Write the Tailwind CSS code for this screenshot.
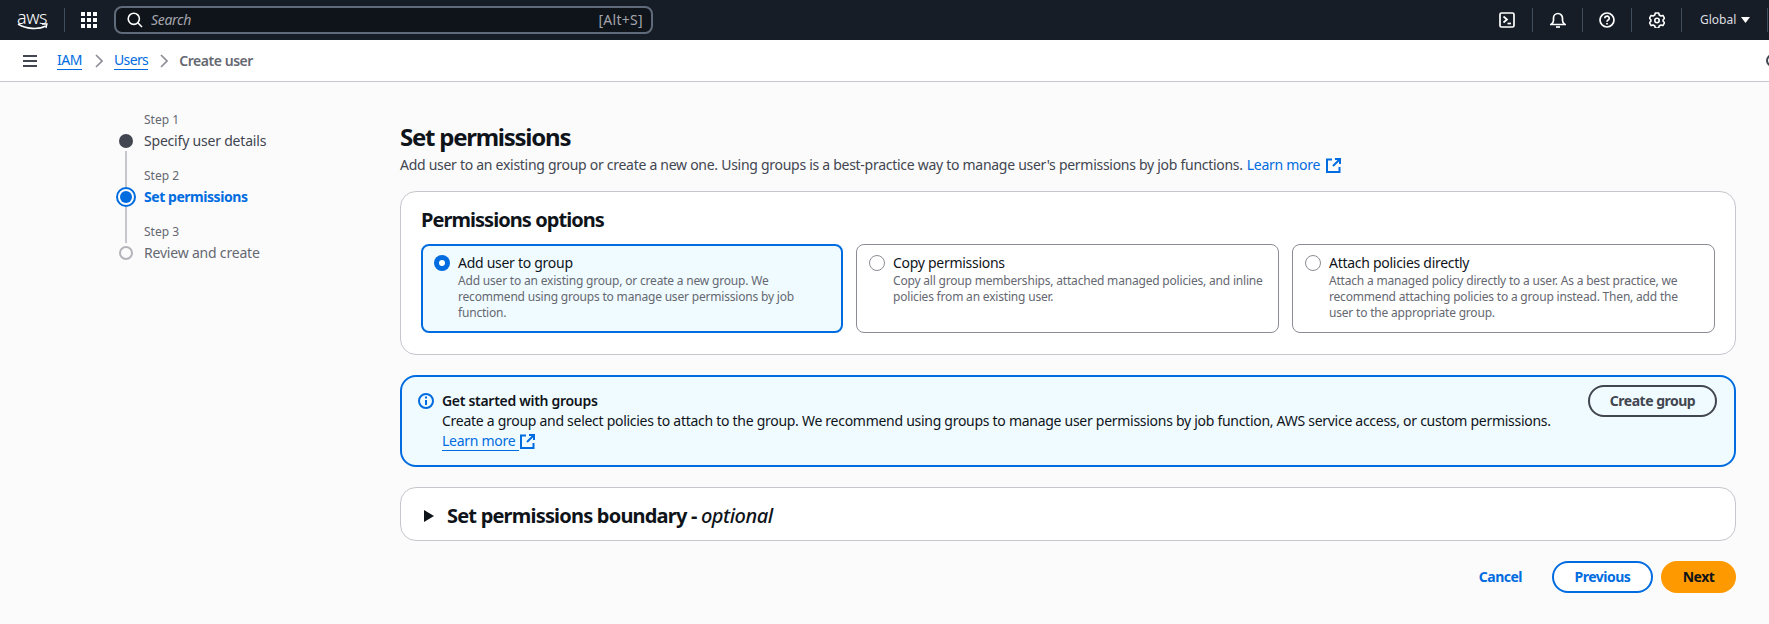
<!DOCTYPE html>
<html>
<head>
<meta charset="utf-8">
<script src="https://cdn.jsdelivr.net/npm/@tailwindcss/browser@4"></script>
</head>
<body class="m-0 h-[624px] w-[1769px] overflow-hidden bg-[#fbfbfc] font-['Noto_Sans',sans-serif] text-sm tracking-[-0.28px] text-[#0f141a]">
<header class="flex h-10 items-center bg-[#161d26] text-white tracking-normal">
  <div class="ml-4 flex w-8 flex-col items-center">
    <span class="text-[18px] leading-[14px] font-light tracking-[-0.5px]">aws</span>
    <svg class="-mt-px" width="31" height="8" viewBox="0 0 31 8" fill="none"><path d="M1 1c8 5 20 6 28 2" stroke="#fff" stroke-width="1.6"/><path d="M25 1l5 0-1 4" stroke="#fff" stroke-width="1.3"/></svg>
  </div>
  <div class="ml-[16px] h-6 w-px bg-[#414d5c]"></div>
  <svg class="ml-4" width="16" height="16" viewBox="0 0 16 16" fill="#fff"><rect x="0" y="0" width="4" height="4"/><rect x="6" y="0" width="4" height="4"/><rect x="12" y="0" width="4" height="4"/><rect x="0" y="6" width="4" height="4"/><rect x="6" y="6" width="4" height="4"/><rect x="12" y="6" width="4" height="4"/><rect x="0" y="12" width="4" height="4"/><rect x="6" y="12" width="4" height="4"/><rect x="12" y="12" width="4" height="4"/></svg>
  <div class="ml-[17px] flex h-[28px] w-[539px] items-center rounded-lg border-2 border-[#5f6b7a] bg-[#0f141a] pl-[11px] pr-[8px]">
    <svg width="16" height="16" viewBox="0 0 16 16" fill="none" stroke="#fff" stroke-width="1.6"><circle cx="6.8" cy="6.8" r="5.6"/><path d="M10.8 10.8L15 15"/></svg>
    <span class="ml-2 text-sm tracking-[-0.3px] italic text-[#a4a4ad]">Search</span>
    <span class="ml-auto text-sm tracking-[0.3px] text-[#a4a4ad]">[Alt+S]</span>
  </div>
  <div class="ml-auto flex items-center">
    <div class="flex w-[50px] justify-center">
      <svg width="16" height="16" viewBox="0 0 16 16" fill="none" stroke="#fff" stroke-width="1.7"><rect x="1" y="1" width="14" height="14" rx="1.5"/><path d="M4.5 4.5L8 7.5 4.5 10.5"/><path d="M8.5 11.5H12"/></svg>
    </div>
    <div class="h-6 w-px bg-[#414d5c]"></div>
    <div class="flex w-[49px] justify-center">
      <svg width="16" height="16" viewBox="0 0 16 16" fill="none" stroke="#fff" stroke-width="1.7"><path d="M1 12.500c1.800-1 2.500-2 2.500-4V6a4.500 4.500 0 019 0v2.500c0 2 .7 3 2.500 4z"/><path d="M6 15h4"/></svg>
    </div>
    <div class="h-6 w-px bg-[#414d5c]"></div>
    <div class="flex w-[48px] justify-center">
      <svg width="16" height="16" viewBox="0 0 16 16" fill="none" stroke="#fff" stroke-width="1.7"><circle cx="8" cy="8" r="7"/><path d="M5.800 6.300a2.200 2.200 0 114 1.200c-.7.7-1.800 1-1.800 2.300"/><path d="M8 11v1.500"/></svg>
    </div>
    <div class="h-6 w-px bg-[#414d5c]"></div>
    <div class="flex w-[49px] justify-center">
      <svg width="16" height="16" viewBox="0 0 16 16" fill="none" stroke="#fff" stroke-width="1.600"><path d="M6.300 1h3.400l.5 2 1.700 1 2-.6 1.700 2.900-1.500 1.500v1.400l1.500 1.500-1.700 2.900-2-.6-1.700 1-.5 2H6.300l-.5-2-1.700-1-2 .6L.4 10.700l1.500-1.500V7.800L.4 6.300l1.700-2.900 2 .6 1.700-1z" stroke-linejoin="round"/><circle cx="8" cy="8.500" r="2.200"/></svg>
    </div>
    <div class="h-6 w-px bg-[#414d5c]"></div>
    <div class="flex w-[85px] items-center pl-[18px] text-xs text-[#dedee3]">
      <span>Global</span>
      <svg class="ml-[5px]" width="9" height="6" viewBox="0 0 9 6" fill="#fff"><path d="M0 0h9L4.500 6z"/></svg>
    </div>
    <div class="h-6 w-px bg-[#414d5c]"></div>
    <div class="w-px"></div>
  </div>
</header>
<nav class="relative flex h-[42px] items-center overflow-hidden border-b border-[#c6c6cd] bg-white">
  <svg class="ml-[23px]" width="14" height="12" viewBox="0 0 14 12" fill="none" stroke="#424650" stroke-width="2"><path d="M0 1h14M0 6h14M0 11h14"/></svg>
  <a class="ml-5 border-b border-[#006ce0] leading-[18px] tracking-[-0.5px] text-[#006ce0]">IAM</a>
  <svg class="ml-[13px]" width="8" height="14" viewBox="0 0 8 14" fill="none" stroke="#8c8c94" stroke-width="1.600"><path d="M1 1l6 6-6 6"/></svg>
  <a class="ml-[11px] border-b border-[#006ce0] leading-[18px] tracking-[-0.6px] text-[#006ce0]">Users</a>
  <svg class="ml-[12px]" width="8" height="14" viewBox="0 0 8 14" fill="none" stroke="#8c8c94" stroke-width="1.600"><path d="M1 1l6 6-6 6"/></svg>
  <span class="ml-[11px] font-semibold tracking-[-0.45px] text-[#656871]">Create user</span>
  <span class="absolute left-[1766px] top-[14px] h-[13px] w-[13px] rounded-full border-2 border-[#424650]"></span>
</nav>
<div class="flex">
  <aside class="w-[400px] shrink-0 pl-[116px] pt-[29px] tracking-[-0.2px]">
    <div class="flex h-[20px] items-center pb-[2px] pl-[28px] text-xs tracking-normal text-[#656871]">Step 1</div>
    <div class="flex h-5 items-center">
      <span class="ml-[3px] h-[14px] w-[14px] rounded-full bg-[#424650]"></span>
      <span class="ml-[11px] text-[#424650]">Specify user details</span>
    </div>
    <div class="relative flex h-9 items-end pl-[28px] text-xs tracking-normal text-[#656871]">
      <span class="absolute left-[9px] top-[0px] h-[36px] w-[2px] bg-[#c6c6cd]"></span>
      <span class="mb-px h-[20px] leading-[20px]">Step 2</span>
    </div>
    <div class="flex h-5 items-center">
      <span class="flex h-5 w-5 items-center justify-center rounded-full border-2 border-[#006ce0]"><span class="h-3 w-3 rounded-full bg-[#006ce0]"></span></span>
      <span class="ml-2 font-bold tracking-[-0.45px] text-[#006ce0]">Set permissions</span>
    </div>
    <div class="relative flex h-9 items-end pl-[28px] text-xs tracking-normal text-[#656871]">
      <span class="absolute left-[9px] top-[0px] h-[36px] w-[2px] bg-[#c6c6cd]"></span>
      <span class="mb-px h-[20px] leading-[20px]">Step 3</span>
    </div>
    <div class="flex h-5 items-center">
      <span class="ml-[3px] h-[14px] w-[14px] rounded-full border-2 border-[#b4b4bb]"></span>
      <span class="ml-[11px] text-[#656871]">Review and create</span>
    </div>
  </aside>
  <main class="w-[1336px] pt-[40px]">
    <h1 class="text-2xl leading-[30px] font-bold tracking-[-1.25px] text-[#0f141a]">Set permissions</h1>
    <p class="mt-[3px] flex h-5 items-center text-[#424650]">Add user to an existing group or create a new one. Using groups is a best-practice way to manage user's permissions by job functions.<a class="ml-1 text-[#006ce0]">Learn more</a>
      <svg class="ml-[6px]" width="15" height="15" viewBox="0 0 15 15" fill="none" stroke="#006ce0" stroke-width="2"><path d="M6 1.500H1v12.500h12.500V9"/><path d="M9 1h5v5"/><path d="M14 1L7 8"/></svg>
    </p>
    <section class="mt-[16px] h-[164px] rounded-2xl border border-[#c6c6cd] bg-white px-5 pt-[14px]">
      <h2 class="text-xl leading-[28px] font-bold tracking-[-0.95px]">Permissions options</h2>
      <div class="mt-[10px] flex gap-[13px]">
        <div class="flex h-[89px] w-[422px] rounded-lg border-2 border-[#006ce0] bg-[#f0fbff] pl-[11px] pr-3 pt-[7px]">
          <span class="mt-[2px] flex h-4 w-4 shrink-0 items-center justify-center rounded-full bg-[#006ce0]"><span class="h-[6px] w-[6px] rounded-full bg-white"></span></span>
          <div class="ml-2">
            <div class="leading-5">Add user to group</div>
            <div class="text-xs leading-4 tracking-[-0.19px] text-[#656871]">Add user to an existing group, or create a new group. We recommend using groups to manage user permissions by job function.</div>
          </div>
        </div>
        <div class="flex h-[89px] w-[423px] rounded-lg border border-[#8c8c94] bg-white pl-3 pr-3 pt-[8px]">
          <span class="mt-[2px] h-4 w-4 shrink-0 rounded-full border border-[#8c8c94]"></span>
          <div class="ml-2">
            <div class="leading-5">Copy permissions</div>
            <div class="text-xs leading-4 tracking-[-0.19px] text-[#656871]">Copy all group memberships, attached managed policies, and inline policies from an existing user.</div>
          </div>
        </div>
        <div class="flex h-[89px] w-[423px] rounded-lg border border-[#8c8c94] bg-white pl-3 pr-3 pt-[8px]">
          <span class="mt-[2px] h-4 w-4 shrink-0 rounded-full border border-[#8c8c94]"></span>
          <div class="ml-2">
            <div class="leading-5">Attach policies directly</div>
            <div class="text-xs leading-4 tracking-[-0.19px] text-[#656871]">Attach a managed policy directly to a user. As a best practice, we recommend attaching policies to a group instead. Then, add the user to the appropriate group.</div>
          </div>
        </div>
      </div>
    </section>
    <section class="mt-5 flex h-[92px] rounded-2xl border-2 border-[#006ce0] bg-[#f0fbff] pl-4 pr-[17px] pt-[8px]">
      <svg class="mt-[8px] shrink-0" width="16" height="16" viewBox="0 0 16 16" fill="none" stroke="#006ce0" stroke-width="2"><circle cx="8" cy="8" r="7"/><path d="M8 7v5M8 3.500v2"/></svg>
      <div class="ml-2 pt-[6px]">
        <div class="leading-5 font-semibold tracking-[-0.3px]">Get started with groups</div>
        <div class="leading-5">Create a group and select policies to attach to the group. We recommend using groups to manage user permissions by job function, AWS service access, or custom permissions.</div>
        <div class="flex h-5 items-center">
          <a class="border-b border-[#006ce0] leading-[19px] text-[#006ce0]">Learn more&nbsp;</a>
          <svg class="ml-[1px]" width="15" height="15" viewBox="0 0 15 15" fill="none" stroke="#006ce0" stroke-width="2"><path d="M6 1.500H1v12.500h12.500V9"/><path d="M9 1h5v5"/><path d="M14 1L7 8"/></svg>
        </div>
      </div>
      <button class="ml-auto flex h-8 w-[129px] shrink-0 items-center justify-center rounded-full border-2 border-[#424650] font-bold tracking-[-0.5px] text-[#424650]">Create group</button>
    </section>
    <section class="mt-5 flex h-[54px] items-center rounded-2xl border border-[#c6c6cd] bg-white pl-[23px] pt-[4px]">
      <svg width="11" height="12" viewBox="0 0 11 12" fill="#0f141a"><path d="M0 0l10 6-10 6z"/></svg>
      <h2 class="ml-[12px] text-xl font-bold tracking-[-0.8px]">Set permissions boundary - <i class="font-medium tracking-[-0.5px]">optional</i></h2>
    </section>
    <div class="mt-5 flex items-center justify-end font-bold tracking-[-0.5px]">
      <span class="mr-[30px] text-[#006ce0]">Cancel</span>
      <button class="flex h-8 w-[101px] items-center justify-center rounded-full border-2 border-[#006ce0] bg-white text-[#006ce0]">Previous</button>
      <button class="ml-2 flex h-8 w-[75px] items-center justify-center rounded-full bg-[#ff9900] text-[#0f141a]">Next</button>
    </div>
  </main>
</div>
</body>
</html>
